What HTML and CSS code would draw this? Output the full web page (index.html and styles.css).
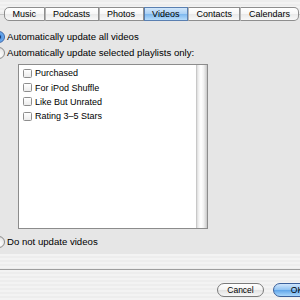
FILE: index.html
```html
<!DOCTYPE html>
<html lang="en">
<head>
    <meta charset="UTF-8">
    <title>Videos Preferences</title>
    <link rel="stylesheet" href="styles.css">
</head>
<body>
    <div class="tabs">
        <div class="tab">Music</div>
        <div class="tab">Podcasts</div>
        <div class="tab">Photos</div>
        <div class="tab selected">Videos</div>
        <div class="tab">Contacts</div>
        <div class="tab">Calendars</div>
    </div>

    <div class="panel">
        <div class="radio-row">
            <span class="radio on"></span>
            <span>Automatically update all videos</span>
        </div>
        <div class="radio-row">
            <span class="radio"></span>
            <span>Automatically update selected playlists only:</span>
        </div>

        <div class="listbox">
            <div class="list-items">
                <div class="item"><span class="check"></span>Purchased</div>
                <div class="item"><span class="check"></span>For iPod Shuffle</div>
                <div class="item"><span class="check"></span>Like But Unrated</div>
                <div class="item"><span class="check"></span>Rating 3–5 Stars</div>
            </div>
            <div class="scrollbar"></div>
        </div>

        <div class="radio-row last">
            <span class="radio"></span>
            <span>Do not update videos</span>
        </div>
    </div>

    <div class="footer">
        <button type="button" class="button">Cancel</button>
        <button type="button" class="button default">OK</button>
    </div>
</body>
</html>
```

FILE: styles.css
```css
html, body {
    margin: 0;
    padding: 0;
    width: 300px;
    height: 300px;
    overflow: hidden;
}
body {
    font-family: "Liberation Sans", Arial, sans-serif;
    color: #000;
    background: repeating-linear-gradient(#ededed 0, #ededed 2px, #f3f3f3 2px, #f3f3f3 4px);
}
.tabs {
    position: relative;
    z-index: 1;
    display: flex;
    margin: 7px 0 0 4px;
    height: 14px;
}
.tab {
    display: flex;
    align-items: center;
    padding: 0 7.5px;
    font-size: 9px;
    border: 1px solid #8e8e8e;
    border-left: 1px solid #b4b4b4;
    background: linear-gradient(#ffffff 0%, #f6f6f6 50%, #e9e9e9 51%, #f8f8f8 100%);
    box-sizing: border-box;
    height: 14px;
}
.tab:first-child {
    border-left: 1px solid #8e8e8e;
    border-radius: 5px 0 0 5px;
}
.tab:last-child {
    border-radius: 0 5px 5px 0;
}
.tab.selected {
    border-color: #5a7fb0;
    background: linear-gradient(#d2e7fb 0%, #a9d0f5 50%, #7cb7ef 51%, #b6dcfb 100%);
}
.panel {
    margin: -7px -10px 0 -10px;
    padding: 13.5px 3px 4.5px 3px;
    background: #e6e6e6;
    border-top: 1px solid #c4c4c4;
    box-sizing: border-box;
}
.radio-row {
    display: flex;
    align-items: center;
    gap: 2px;
    height: 16px;
    font-size: 9.6px;
}
.radio-row.last {
    margin-top: 4.5px;
}
.radio {
    width: 12px;
    height: 12px;
    border-radius: 50%;
    box-sizing: border-box;
    border: 1px solid #8a8a8a;
    background: radial-gradient(circle at 50% 70%, #ffffff 0%, #ececec 60%, #cfcfcf 100%);
    flex: none;
}
.radio.on {
    border-color: #3a64a8;
    background: radial-gradient(circle at 50% 50%, #1c3f7a 0, #1c3f7a 1.8px, #4f94e4 2.4px, #8cc2f4 100%);
}
.listbox {
    display: flex;
    margin: 3.5px 0 0 25px;
    width: 190px;
    height: 165px;
    border: 1px solid #8c8c8c;
    box-sizing: border-box;
    background: #fff;
}
.list-items {
    flex: 1;
    padding: 1px 0 0 4px;
}
.item {
    display: flex;
    align-items: center;
    gap: 3px;
    height: 14.4px;
    font-size: 9px;
}
.check {
    width: 9px;
    height: 9px;
    box-sizing: border-box;
    border: 1px solid #8e8e8e;
    border-radius: 1.5px;
    background: linear-gradient(#ffffff, #ececec);
    flex: none;
}
.scrollbar {
    width: 10px;
    border-left: 1px solid #c8c8c8;
    background: linear-gradient(to right, #dcdcdc 0%, #f4f4f4 20%, #ffffff 40%, #f2f2f2 65%, #d6d6d6 90%, #c4c4c4 100%);
}
.footer {
    display: flex;
    justify-content: flex-end;
    gap: 9px;
    margin: 15px -21px 0 0;
    padding-top: 13px;
    border-top: 1px solid #9e9e9e;
}
.button {
    width: 47px;
    height: 14px;
    padding: 0;
    font-family: "Liberation Sans", Arial, sans-serif;
    font-size: 8.5px;
    color: #000;
    border: 1px solid #7a7a7a;
    border-radius: 7px;
    background: linear-gradient(#ffffff 0%, #f3f3f3 50%, #e2e2e2 51%, #f7f7f7 100%);
}
.button.default {
    width: 48px;
    border-color: #3a5f9a;
    background: linear-gradient(#cfe5fb 0%, #8ec2f2 50%, #5ea4ea 51%, #a9d6fb 100%);
}
```
